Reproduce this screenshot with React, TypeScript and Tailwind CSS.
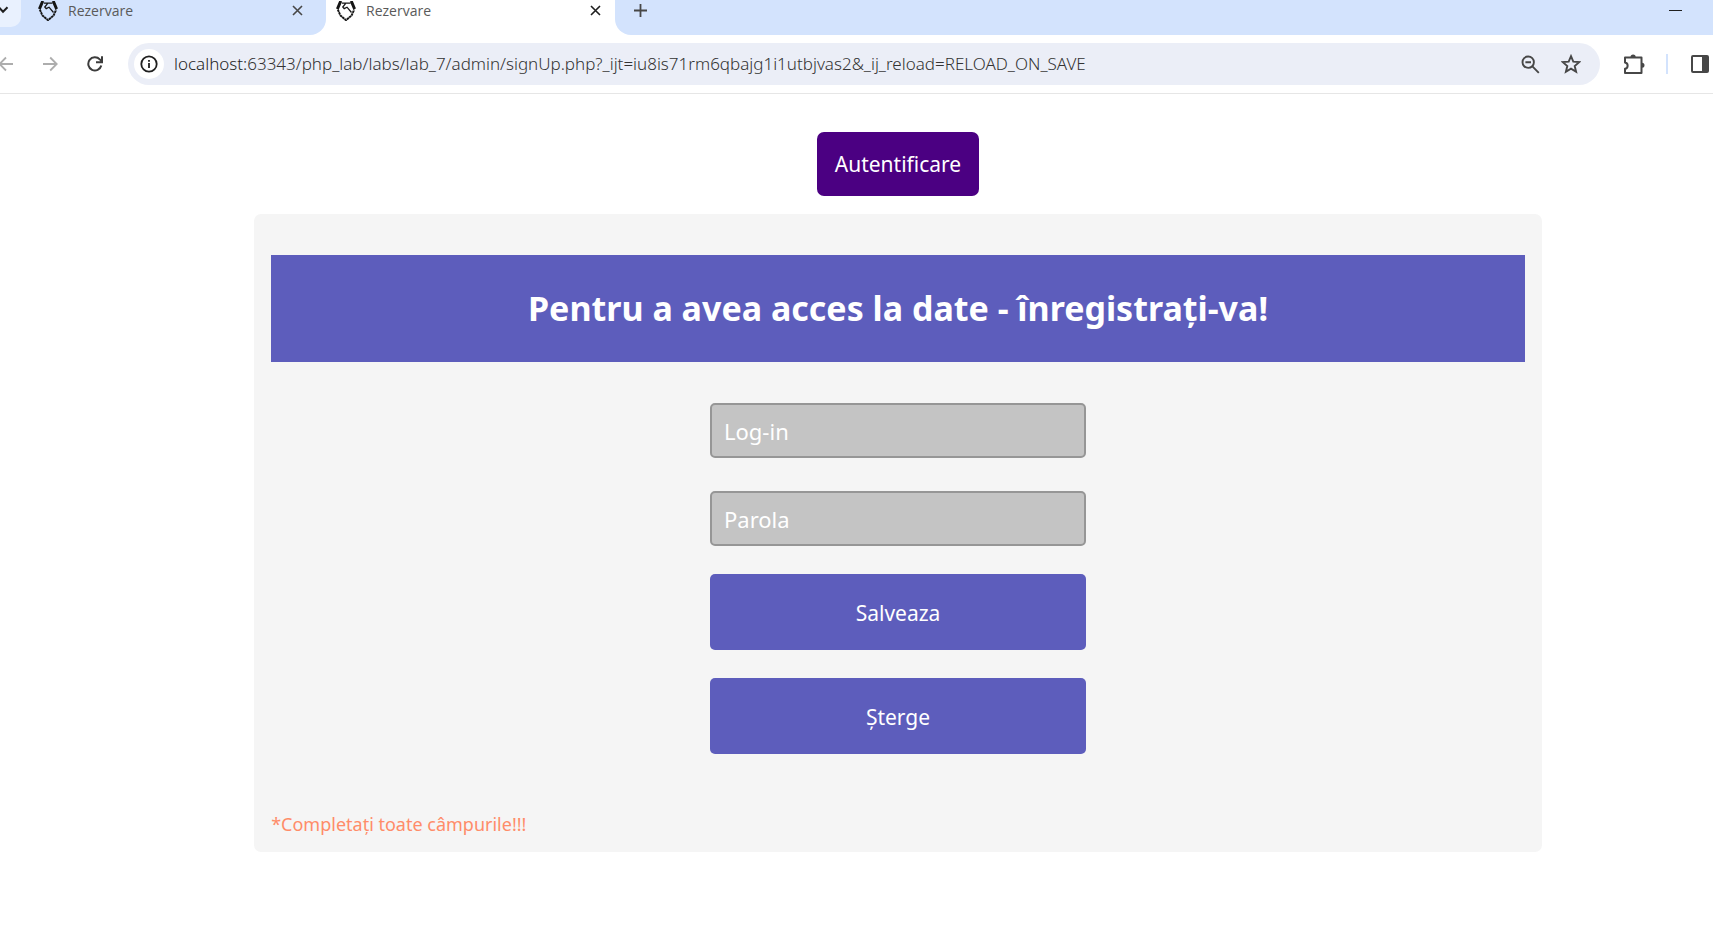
import React from "react";

function Favicon() {
  return (
    <svg className="size-5 shrink-0" viewBox="0 0 20 20" fill="none" stroke="#151515" aria-hidden="true">
      <path d="M4.8 0 1.4 8M15.2 0 18.6 8" strokeWidth="3" />
      <path d="M1.8 8.5 4.400 14.500 10 19.200 15.600 14.500 18.200 8.500" strokeWidth="1.900" strokeDasharray="2.600 .4" />
      <path d="M6 2.200H14.500M9.500 2.600 6.800 6 8.200 7.600 11 6.200 15.500 11.500" strokeWidth="1.300" />
    </svg>
  );
}

function CloseIcon() {
  return (
    <svg className="size-[11px]" viewBox="0 0 11 11" fill="none" stroke="currentColor" strokeWidth="1.6" aria-hidden="true">
      <path d="m1 1 9 9M10 1 1 10" />
    </svg>
  );
}

function Tab({ active = false }: { active?: boolean }) {
  return (
    <div className={`flex min-w-0 items-center ${active ? "text-[#1f1f1f]" : "text-[#474747]"}`}>
      <Favicon />
      <span className="ml-[10px] w-[224px] pt-px text-[14px] leading-5 text-[#5a5a5a]">Rezervare</span>
      <button type="button" aria-label="Close tab" className="flex items-center justify-center">
        <CloseIcon />
      </button>
    </div>
  );
}

function TabStrip() {
  return (
    <div className="flex h-[35px] bg-white">
      <div className="flex w-[326px] shrink-0 items-start rounded-br-[16px] bg-[#d3e3fd]">
        <button type="button" aria-label="Search tabs" className="flex h-[27px] w-[21px] items-start rounded-br-[10px] bg-[#e9f1fe]">
          <svg className="mt-[6px] h-2 w-[9px]" viewBox="0 0 9 8" fill="none" stroke="#1f1f1f" strokeWidth="2" aria-hidden="true">
            <path d="M-1 1.5 3 5.8 7.5 1.2" />
          </svg>
        </button>
        <div className="ml-[17px]">
          <Tab />
        </div>
      </div>
      <div className="w-[289px] shrink-0 pl-[10px]">
        <Tab active />
      </div>
      <div className="flex flex-1 items-start justify-between rounded-bl-[16px] bg-[#d3e3fd] pr-[31px] pl-[19px]">
        <button type="button" aria-label="New tab" className="mt-1">
          <svg className="size-[13px]" viewBox="0 0 13 13" fill="none" stroke="#474747" strokeWidth="1.8" aria-hidden="true">
            <path d="M6.5 0v13M0 6.5h13" />
          </svg>
        </button>
        <button type="button" aria-label="Minimize" className="flex h-5 w-[13px] items-center">
          <span className="h-px w-full bg-[#1f1f1f]" />
        </button>
      </div>
    </div>
  );
}

function Toolbar() {
  return (
    <div className="flex h-[59px] items-center border-b border-[#e6e6e6] bg-white">
      <button type="button" aria-label="Back" className="w-[43px]">
        <svg className="h-4 w-[14px]" viewBox="0 0 14 16" fill="none" stroke="#adadad" strokeWidth="1.8" aria-hidden="true">
          <path d="M13 8H0M6 1.5-.5 8 6 14.5" />
        </svg>
      </button>
      <button type="button" aria-label="Forward" className="w-11">
        <svg className="h-4 w-[15px]" viewBox="0 0 15 16" fill="none" stroke="#adadad" strokeWidth="1.8" aria-hidden="true">
          <path d="M0 8h13.5M7.2 1.5 13.7 8l-6.5 6.5" />
        </svg>
      </button>
      <button type="button" aria-label="Reload" className="w-[41px]">
        <svg className="size-4" viewBox="0 0 16 16" fill="none" stroke="#3c3c3c" strokeWidth="2" aria-hidden="true">
          <path d="M14.3 9.5A6.6 6.6 0 1 1 12.8 3.4L15 5.6M15 .2V6.2H9" />
        </svg>
      </button>
      <div className="flex h-[42px] min-w-0 flex-1 items-center rounded-full bg-[#ebeef7] pr-[19px] pl-[6px]">
        <button type="button" aria-label="View site information" className="flex size-[30px] shrink-0 items-center justify-center rounded-full bg-white">
          <svg className="size-[18px]" viewBox="0 0 18 18" fill="none" stroke="#1f1f1f" strokeWidth="1.8" aria-hidden="true">
            <circle cx="9" cy="9" r="7.7" />
            <path d="M9 8v5M9 4.9v1.8" />
          </svg>
        </button>
        <div className="ml-[10px] min-w-0 flex-1 truncate font-['Noto_Sans',sans-serif] text-[17px] leading-6 font-light text-[#333333]">
          <span className="text-[#1f1f1f]">localhost:</span>
          63343/php_lab/labs/lab_7/admin/signUp.php?_ijt=iu8is71rm6qbajg1i1utbjvas2&amp;_ij_reload=RELOAD_ON_SAVE
        </div>
        <button type="button" aria-label="Zoom" className="mr-[21px]">
          <svg className="size-[19px]" viewBox="0 0 19 19" fill="none" stroke="#474747" strokeWidth="1.9" aria-hidden="true">
            <circle cx="7.2" cy="7.2" r="5.7" />
            <path d="m11.4 11.4 6.4 6.4M4.4 7.2h5.6" />
          </svg>
        </button>
        <button type="button" aria-label="Bookmark this tab">
          <svg className="size-5" viewBox="0 0 20 20" fill="none" stroke="#474747" strokeWidth="1.900" aria-hidden="true">
            <path d="m10 2.2 2.3 5.4 5.9.5-4.5 3.9 1.4 5.7-5.1-3-5.1 3L6.300 12 1.800 8.100l5.900-.500z" />
          </svg>
        </button>
      </div>
      <button type="button" aria-label="Extensions" className="ml-[23px]">
        <svg className="h-[21px] w-[22px]" viewBox="0 0 22 21" fill="none" stroke="#474747" strokeWidth="2" strokeLinejoin="round" aria-hidden="true">
          <path d="M2 3.500H18.500V19H2V14.800a3.200 3.200 0 0 0 0-6.300z" />
          <path d="M7.500 3a2.600 2.600 0 0 1 5.200 0zM19 8.700a2.500 2.500 0 0 1 0 5z" fill="#474747" stroke="none" />
        </svg>
      </button>
      <span className="mr-[23px] ml-[21px] h-5 w-[2px] bg-[#d3e3fd]" />
      <button type="button" aria-label="Side panel" className="mr-1">
        <svg className="size-[18px]" viewBox="0 0 18 18" aria-hidden="true">
          <rect x="1" y="1" width="16" height="16" rx="1" fill="none" stroke="#474747" strokeWidth="2" />
          <path d="M11 1h6v16h-6z" fill="#474747" />
        </svg>
      </button>
    </div>
  );
}

const fieldClass =
  "h-[55px] w-full rounded-[5px] border-2 border-[#969696] bg-[#c4c4c4] px-3 text-[22px] text-white placeholder:text-white placeholder:opacity-100 outline-none";
const actionClass =
  "h-[76px] w-full rounded-[5px] bg-[#5d5dbc] pt-1 text-[21px] text-white";

export default function App() {
  return (
    <div className="min-h-screen bg-white font-['Open_Sans','Noto_Sans',sans-serif]">
      <header>
        <TabStrip />
        <Toolbar />
      </header>
      <main className="flex flex-col items-center pt-[38px] pb-10 pl-[83px] font-['Noto_Sans',sans-serif]">
        <a href="#login" className="rounded-[7px] bg-[#4b0082] px-[18px] py-4 text-[21px] leading-8 text-white">
          Autentificare
        </a>
        <form className="mt-[18px] w-[79%] rounded-[7px] bg-[#f5f5f5] px-[17px] pt-[41px] pb-4" onSubmit={(e) => e.preventDefault()}>
          <h1 className="bg-[#5d5dbc] py-7 text-center text-[34px] leading-[51px] font-bold text-white">
            Pentru a avea acces la date - înregistrați-va!
          </h1>
          <div className="mx-auto mt-[41px] flex w-[376px] flex-col">
            <input type="text" aria-label="Log-in" placeholder="Log-in" className={fieldClass} />
            <input type="password" aria-label="Parola" placeholder="Parola" className={`${fieldClass} mt-[33px]`} />
            <button type="submit" className={`${actionClass} mt-7`}>Salveaza</button>
            <button type="reset" className={`${actionClass} mt-7`}>Șterge</button>
          </div>
          <p className="mt-[58px] text-[18px] leading-6 text-[#ff8c69]">*Completați toate câmpurile!!!</p>
        </form>
      </main>
    </div>
  );
}
